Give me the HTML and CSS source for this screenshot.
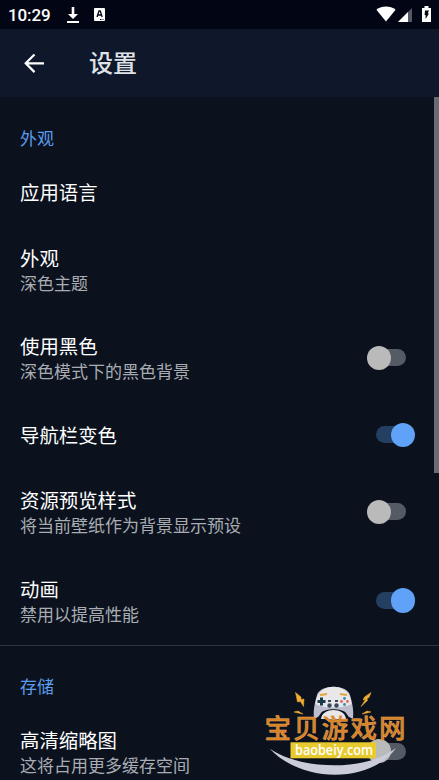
FILE: index.html
```html
<!DOCTYPE html>
<html lang="zh-CN">
<head>
<meta charset="utf-8">
<title>设置</title>
<link rel="stylesheet" href="styles.css">
</head>
<body>
<div class="screen">
  <div class="status">
    <span class="clock">10:29</span>
    <svg class="ic-download" width="12" height="17" viewBox="0 0 12 17"><path d="M4.700 0h2.600v7H11L6 12 1 7h3.700zM0 14h12v2H0z" fill="#fff"/></svg>
    <svg class="ic-app" width="11" height="13" viewBox="0 0 11 13"><rect width="11" height="13" rx="1" fill="#fff"/><path d="M3 9l2-6h1.200l2 6M3.800 7h3.600" fill="none" stroke="#050818" stroke-width="1.300"/><path d="M6 11.500h1.500M8.500 11.500h1" stroke="#050818"/></svg>
    <span class="grow"></span>
    <svg class="ic-wifi" width="20" height="16" viewBox="0 0 20 16"><path d="M.4 3.800C5.800-.5 14.200-.5 19.600 3.800L10 15.500z" fill="#fff"/></svg>
    <svg class="ic-signal" width="14" height="14" viewBox="0 0 14 14"><path d="M0 14L14 0v14z" fill="#555765"/><path d="M0 14L10 4v10z" fill="#fff"/></svg>
    <svg class="ic-battery" width="9" height="16" viewBox="0 0 9 16"><path d="M2.500 0h4v2H9v14H0V2h2.500z" fill="#fff"/><path d="M3 4.500h4L5.700 7.500H7L3.600 13V9H2.600z" fill="#050818"/></svg>
  </div>
  <header class="appbar">
    <svg width="20" height="20" viewBox="0 0 20 20"><path d="M20 10.300H2M10.500 1.500L1.700 10.300l8.800 8.800" fill="none" stroke="#fff" stroke-width="2.200"/></svg>
    <h1>设置</h1>
  </header>
  <main class="list">
    <h2>外观</h2>
    <div class="row single"><div class="text"><div class="title">应用语言</div></div></div>
    <div class="row"><div class="text"><div class="title">外观</div><div class="sub">深色主题</div></div></div>
    <div class="row"><div class="text"><div class="title">使用黑色</div><div class="sub">深色模式下的黑色背景</div></div><span class="switch"></span></div>
    <div class="row single"><div class="text"><div class="title">导航栏变色</div></div><span class="switch on"></span></div>
    <div class="row"><div class="text"><div class="title">资源预览样式</div><div class="sub">将当前壁纸作为背景显示预设</div></div><span class="switch"></span></div>
    <div class="row"><div class="text"><div class="title">动画</div><div class="sub">禁用以提高性能</div></div><span class="switch on"></span></div>
    <h2 class="divided">存储</h2>
    <div class="row"><div class="text"><div class="title">高清缩略图</div><div class="sub">这将占用更多缓存空间</div></div><span class="switch"></span></div>
  </main>
  <div class="scrollbar"></div>
  <svg class="watermark" width="150" height="100" viewBox="0 0 150 100">
    <path d="M13.500 68.500C42 89 108 93 140 68C116 102 48 105 13.500 68.500z" fill="#cbccda"/>
    <path d="M58 38C57 30 59 22 61 15C64 4 91 4 94 15C96 22 98 30 97 38C93 38 92 36 90 33C86 28 69 28 65 33C63 36 62 38 58 38z" fill="#bcbdce"/>
    <path d="M59.500 24C60 1 95 1 95.500 24C88 28.500 67 28.500 59.500 24z" fill="#e9e7e7"/>
    <path d="M65 39C66 27 89 27 90 39z" fill="#e9e7e7"/>
    <path d="M64 15l7-1M84 14l7 1" stroke="#e5a33a" stroke-width="1.800"/>
    <path d="M61.500 21.500h8M65.500 17.500v8" stroke="#183b4b" stroke-width="3"/>
    <g fill="#e46763"><circle cx="91.500" cy="21.500" r="1.400"/><circle cx="85.500" cy="21.500" r="1.400"/></g>
    <g fill="#368fad"><circle cx="88.500" cy="18.500" r="1.400"/><circle cx="88.500" cy="24.500" r="1.400"/></g>
    <g fill="#344a62"><circle cx="73.500" cy="25.500" r="2.200"/><circle cx="80.500" cy="25.500" r="2.200"/><path d="M72 20h3v2h-3zM79 20h3v2h-3z"/></g>
    <path d="M39.500 12.500l5.500 4.500v2.500l3-.5-.5 7.500-3-5-3 .5zM115 12.500l-6.500 4.500-1.500 3 2.500-.5-4.500 7 6.500-6-.5-2 2-1zM38 32l4-1 5 3-5-1zM115 32l-4-1-5 3 5-1z" fill="#efad31" stroke="#efad31" stroke-width=".5"/>
    <text class="brand" x="8.500" y="58" textLength="141" lengthAdjust="spacing">宝贝游戏网</text>
    <rect x="34.500" y="62.300" width="85.500" height="16" fill="#e8ca2e"/>
    <text class="domain" x="39" y="75" textLength="78" lengthAdjust="spacingAndGlyphs">baobeiy.com</text>
  </svg>
</div>
</body>
</html>
```
FILE: styles.css
```css
* { box-sizing: border-box; }
body { margin: 0; background: #0b121e; font-family: Roboto, "Noto Sans CJK SC", sans-serif; }
.screen { position: relative; width: 439px; height: 780px; overflow: hidden; background: #0b121e; }
.status { display: flex; align-items: flex-start; height: 29px; padding: 0 8px; background: #020514; color: #fff; }
.clock { width: 59px; font-size: 17px; line-height: 30px; font-weight: 500; letter-spacing: -.1px; }
.ic-download { margin-top: 7px; }
.ic-app { margin: 8px 0 0 15px; }
.grow { flex: 1; }
.ic-wifi { margin: 6px 2px 0 0; }
.ic-signal { margin: 8px 10px 0 0; }
.ic-battery { margin: 6px 0 0; }
.appbar { display: flex; align-items: center; height: 68px; padding-left: 24px; background: #0f182a; }
h1 { margin: 0 0 0 45px; padding-top: 2px; font-size: 24px; line-height: 36px; font-weight: 500; color: #dfe2e6; }
h2 { height: 62.700px; margin: 0; padding: 30px 20px 0; font-size: 17px; line-height: 25px; font-weight: 400; color: #5d9cec; }
h2.divided { height: 62.300px; border-top: 1px solid #2c333f; padding-top: 29.500px; }
.row { display: flex; align-items: center; height: 88.600px; padding: 0 24px 0 20px; }
.row.single { height: 65.300px; }
.text { flex: 1; padding-top: 4px; }
.title { font-size: 19.400px; line-height: 26px; color: #fff; }
.sub { font-size: 17px; line-height: 23px; color: #a9adb3; }
.switch { position: relative; width: 48.400px; height: 24.400px; }
.switch::before { content: ""; position: absolute; left: 9px; top: 3.700px; width: 30px; height: 17px; border-radius: 9px; background: #555b65; }
.switch::after { content: ""; position: absolute; left: 0; top: 0; width: 24.400px; height: 24.400px; border-radius: 50%; background: #bababa; }
.switch.on::before { background: #243f61; }
.switch.on::after { left: 24px; background: #5fa2f7; }
.scrollbar { position: absolute; right: 0; top: 97px; width: 5px; height: 376px; background: #686b73; }
.watermark { position: absolute; left: 256px; top: 680px; }
.brand { font: 500 26.500px "Noto Sans CJK SC", sans-serif; fill: #d98121; stroke: #e3a862; stroke-width: .5px; }
.domain { font: 600 14px "Open Sans", "Noto Sans", sans-serif; fill: #fff; }
```
